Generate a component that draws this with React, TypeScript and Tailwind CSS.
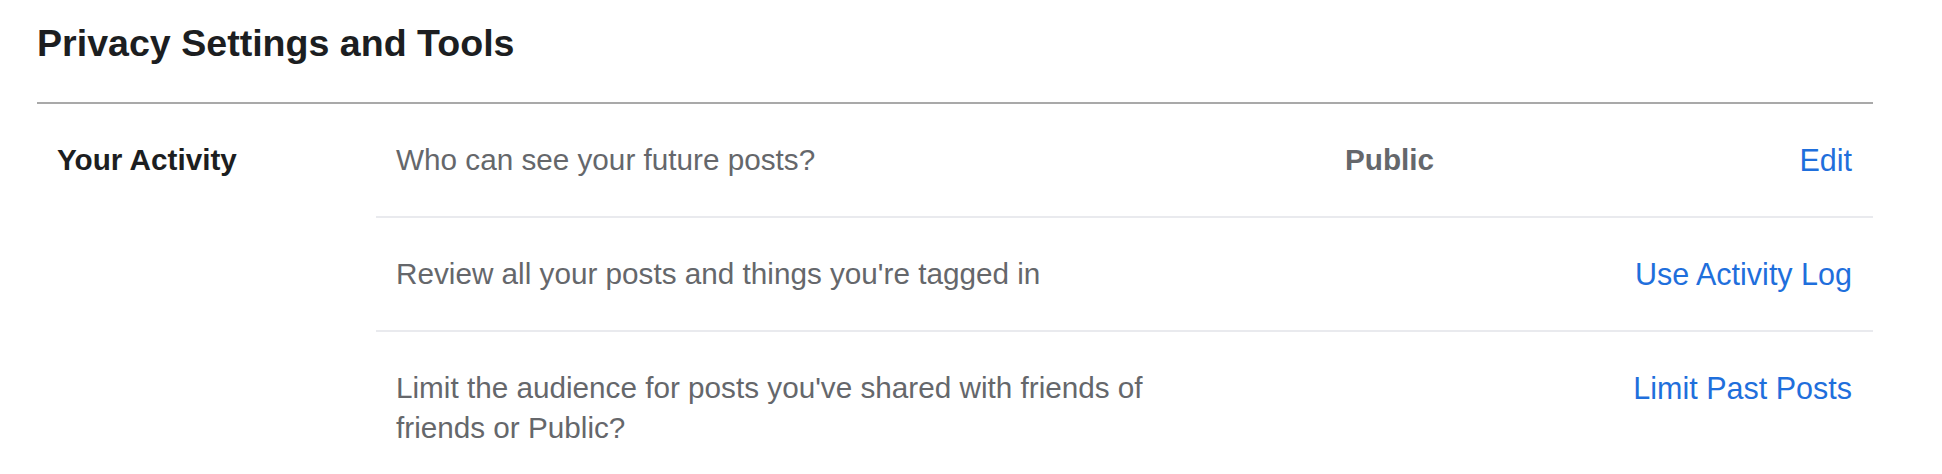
const rows = [
  { text: "Who can see your future posts?", value: "Public", action: "Edit" },
  { text: "Review all your posts and things you're tagged in", action: "Use Activity Log" },
  { text: "Limit the audience for posts you've shared with friends of friends or Public?", action: "Limit Past Posts" },
];

export default function App() {
  return (
    <main className="w-[1942px] h-[474px] overflow-hidden bg-white pl-[37px] pr-[69px] font-['Liberation_Sans',Arial,sans-serif]">
      <div className="h-[102px] pt-[21px]">
        <h1 className="text-[37.6px] leading-[44px] font-bold text-[#1c1e21]">Privacy Settings and Tools</h1>
      </div>
      <div className="h-[2px] bg-[#a9a9a9]" />

      <div className="flex">
        <div className="w-[339px] shrink-0 pl-[20px] pt-[36px] text-[29.7px] leading-[40px] font-bold text-[#1c1e21]">
          Your Activity
        </div>
        <div className="flex-1">
          {rows.map((row, i) => (
            <div
              key={row.action}
              className={`flex items-start pl-[20px] pr-[21px] py-[36px] text-[29.7px] leading-[40px] ${i < rows.length - 1 ? 'border-b-2 border-[#e9eaee]' : ''}`}
            >
              <div className="w-[800px] shrink-0 text-[#65676b]">{row.text}</div>
              {row.value && <div className="ml-[149px] font-bold text-[#65676b]">{row.value}</div>}
              <a href="#" className="ml-auto text-[30.5px] text-[#1f6fdc]">{row.action}</a>
            </div>
          ))}
        </div>
      </div>
    </main>
  );
}
